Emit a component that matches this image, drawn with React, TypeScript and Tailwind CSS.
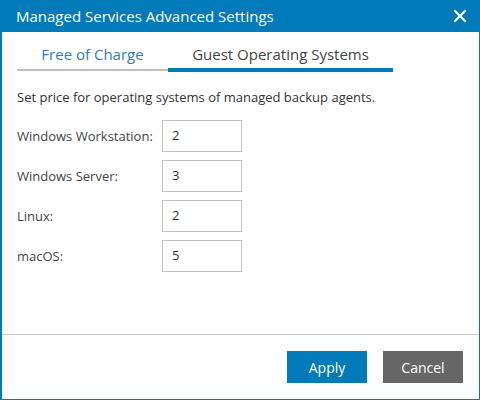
import React from "react";

const rows = [
  { label: "Windows Workstation:", value: "2" },
  { label: "Windows Server:", value: "3" },
  { label: "Linux:", value: "2" },
  { label: "macOS:", value: "5" },
];

export default function App() {
  return (
    <div
      className="w-[480px] h-[400px] flex flex-col bg-white border-l-2 border-r border-b border-[#007ab8] overflow-hidden"
      style={{ fontFamily: '"Open Sans", "Noto Sans", sans-serif' }}
    >
      <div className="h-[32px] shrink-0 bg-[#007ab8] flex items-center justify-between pl-[14px] pr-[13px] -mr-px -ml-[2px]">
        <span className="text-white text-[15px] leading-none pl-[2px]">
          Managed Services Advanced Settings
        </span>
        <svg width="14" height="14" viewBox="0 0 14 14" className="block">
          <path d="M2 2 L12 12 M12 2 L2 12" stroke="white" strokeWidth="2" strokeLinecap="square" />
        </svg>
      </div>

      <div className="flex-1 flex flex-col pl-[15px]">
        <div className="flex h-[40px] items-stretch">
          <div className="w-[151px] flex flex-col">
            <div className="flex-1 flex items-center justify-center pt-[8px] text-[15px] text-[#2f7db8]">
              Free of Charge
            </div>
            <div className="h-[2px] bg-[#c0c0c0] mb-[1px]" />
          </div>
          <div className="w-[225px] flex flex-col">
            <div className="flex-1 flex items-center justify-center pt-[8px] text-[15px] text-[#444444]">
              Guest Operating Systems
            </div>
            <div className="h-[4px] bg-[#007ab8]" />
          </div>
        </div>

        <div className="mt-[16px] text-[13px] leading-[18px] text-[#333333]">
          Set price for operating systems of managed backup agents.
        </div>

        <div className="mt-[14px] flex flex-col gap-[8px]">
          {rows.map((r) => (
            <div key={r.label} className="flex items-center">
              <div className="w-[145px] pt-[2px] text-[13px] text-[#444444]">{r.label}</div>
              <div className="w-[80px] h-[32px] border border-[#c4c4c4] flex items-center pl-[9px] text-[13px] text-[#333333]">
                {r.value}
              </div>
            </div>
          ))}
        </div>
      </div>

      <div className="shrink-0 border-t border-[#c8c8c8] h-[65px] flex items-start justify-end gap-[16px] pt-[16px] pr-[16px]">
        <button className="w-[80px] h-[32px] bg-[#007ab8] text-white text-[14px]">
          Apply
        </button>
        <button className="w-[80px] h-[32px] bg-[#666666] text-white text-[14px]">
          Cancel
        </button>
      </div>
    </div>
  );
}
